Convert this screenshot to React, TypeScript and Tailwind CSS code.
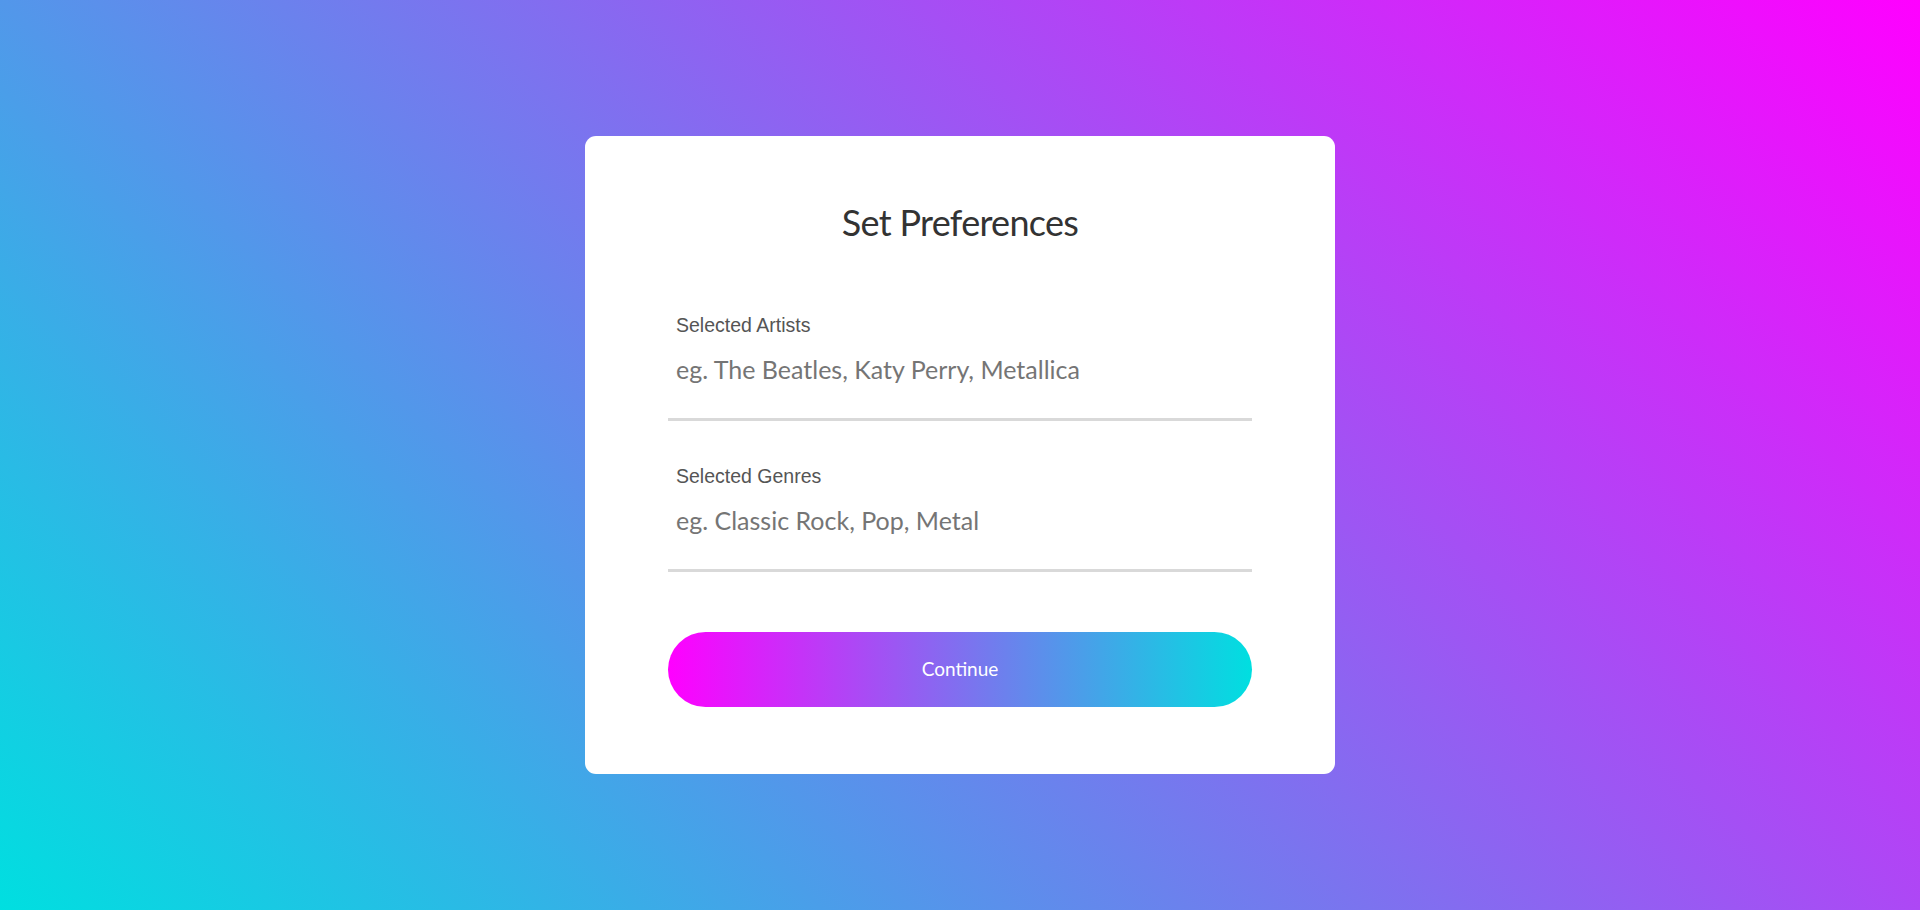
const gill = "font-['Lato','Open_Sans',sans-serif]";

function Field({ label, placeholder }: { label: string; placeholder: string }) {
  return (
    <div className="pb-[29px] border-b-[3px] border-[#d9d9d9]">
      <label className="block px-2 text-[19.5px] leading-[22px] text-[#555555] font-['Liberation_Sans',Arial,sans-serif]">
        {label}
      </label>
      <input
        type="text"
        placeholder={placeholder}
        className={`block w-full h-[40px] mt-[13px] px-2 bg-transparent outline-none text-[25px] text-[#333] placeholder:text-[#757575] ${gill}`}
      />
    </div>
  );
}

export default function App() {
  return (
    <div className="min-h-screen w-full flex items-center justify-center bg-[linear-gradient(45deg,#00dfe0,#ff00ff)]">
      <div className="w-[750px] bg-white rounded-[11px] px-[83px] pt-[62px] pb-[67px]">
        <h1
          className={`text-center text-[36px] leading-[48px] tracking-[-0.7px] text-[#333333] ${gill}`}
        >
          Set Preferences
        </h1>
        <div className="mt-[68px] flex flex-col gap-[44px]">
          <Field
            label="Selected Artists"
            placeholder="eg. The Beatles, Katy Perry, Metallica"
          />
          <Field
            label="Selected Genres"
            placeholder="eg. Classic Rock, Pop, Metal"
          />
        </div>
        <button
          type="button"
          className={`mt-[60px] w-full h-[75px] rounded-full bg-[linear-gradient(to_right,#ff00ff,#00dfe0)] text-white text-[19px] ${gill}`}
        >
          Continue
        </button>
      </div>
    </div>
  );
}
